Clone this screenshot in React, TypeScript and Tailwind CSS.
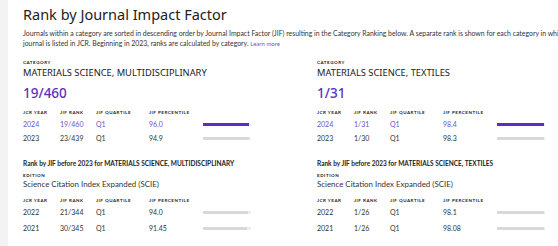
import React from 'react';

interface RankRow {
  year: string;
  rank: string;
  quartile: string;
  percentile: string;
  value: number;
  current?: boolean;
}

interface CategoryData {
  name: string;
  rank: string;
  rows: RankRow[];
  legacy: RankRow[];
}

const categories: CategoryData[] = [
  {
    name: 'MATERIALS SCIENCE, MULTIDISCIPLINARY',
    rank: '19/460',
    rows: [
      { year: '2024', rank: '19/460', quartile: 'Q1', percentile: '96.0', value: 96, current: true },
      { year: '2023', rank: '23/439', quartile: 'Q1', percentile: '94.9', value: 94.9 },
    ],
    legacy: [
      { year: '2022', rank: '21/344', quartile: 'Q1', percentile: '94.0', value: 94 },
      { year: '2021', rank: '30/345', quartile: 'Q1', percentile: '91.45', value: 91.45 },
    ],
  },
  {
    name: 'MATERIALS SCIENCE, TEXTILES',
    rank: '1/31',
    rows: [
      { year: '2024', rank: '1/31', quartile: 'Q1', percentile: '98.4', value: 98.4, current: true },
      { year: '2023', rank: '1/30', quartile: 'Q1', percentile: '98.3', value: 98.3 },
    ],
    legacy: [
      { year: '2022', rank: '1/26', quartile: 'Q1', percentile: '98.1', value: 98.1 },
      { year: '2021', rank: '1/26', quartile: 'Q1', percentile: '98.08', value: 98.08 },
    ],
  },
];

const body = "font-['Lato','Liberation_Sans',sans-serif]";
const heading = "font-['Noto_Sans','Open_Sans',sans-serif]";
const label = "text-[4.5px] leading-[6px] font-bold tracking-[0.12em] uppercase text-[#222]";

const TableHeader: React.FC = () => (
  <div className={`grid grid-cols-[37px_36px_53px_54px_48px] ${label} ${body}`}>
    <span>JCR Year</span>
    <span>JIF Rank</span>
    <span>JIF Quartile</span>
    <span>JIF Percentile</span>
    <span></span>
  </div>
);

const Row: React.FC<{ row: RankRow; height: string }> = ({ row, height }) => (
  <div
    className={`grid grid-cols-[37px_36px_53px_54px_48px] items-center ${height} text-[7px] ${body} ${
      row.current ? 'text-[#6f52c9]' : 'text-[#333]'
    }`}
  >
    <span>{row.year}</span>
    <span>{row.rank}</span>
    <span>{row.quartile}</span>
    <span>{row.percentile}</span>
    <div className="h-[3px] w-[48px] bg-[#eeeeee]">
      <div
        className={`h-full ${row.current ? 'bg-[#5a2fbe]' : 'bg-[#d8d8d8]'}`}
        style={{ width: `${row.value}%` }}
      />
    </div>
  </div>
);

const CategoryBlock: React.FC<{ cat: CategoryData }> = ({ cat }) => (
  <div className="flex flex-col">
    <div className={`${label} ${body}`}>Category</div>
    <div className={`mt-[1px] text-[9.3px] leading-[12px] text-[#222] ${heading}`}>{cat.name}</div>
    <div className={`mt-[5px] text-[13.5px] leading-[18px] font-medium text-[#5a2fbe] ${heading}`}>{cat.rank}</div>
    <div className="mt-[8px]">
      <TableHeader />
      <div className="mt-[1px]">
        {cat.rows.map((r) => (
          <Row key={r.year} row={r} height="h-[14px]" />
        ))}
      </div>
    </div>
    <div className={`mt-[14px] text-[6.5px] leading-[10px] font-bold text-[#222] ${body}`}>
      Rank by JIF before 2023 for {cat.name}
    </div>
    <div className={`mt-[4px] ${label} ${body}`}>Edition</div>
    <div className={`mt-[0px] text-[7.9px] leading-[10px] text-[#333] ${body}`}>
      Science Citation Index Expanded (SCIE)
    </div>
    <div className="mt-[9px]">
      <TableHeader />
      <div className="mt-[0px]">
        {cat.legacy.map((r) => (
          <Row key={r.year} row={r} height="h-[16px]" />
        ))}
      </div>
    </div>
  </div>
);

export default function App() {
  return (
    <div className="flex h-[246px] w-[558px] overflow-hidden bg-white">
      <div className="w-[8px] shrink-0 bg-[#f3f3f3]" />
      <div className="pl-[15px] pt-[4px] flex flex-col min-w-0">
        <h1 className={`text-[14.5px] leading-[20px] text-[#222] ${heading}`}>Rank by Journal Impact Factor</h1>
        <div className={`mt-[4px] text-[6.9px] leading-[10px] text-[#333] whitespace-nowrap ${body}`}>
          <div>
            Journals within a category are sorted in descending order by Journal Impact Factor (JIF) resulting in the
            Category Ranking below. A separate rank is shown for each category in which
          </div>
          <div>
            journal is listed in JCR. Beginning in 2023, ranks are calculated by category.{' '}
            <span className="text-[6px] text-[#6f52c9]">Learn more</span>
          </div>
        </div>
        <div className="mt-[11px] grid grid-cols-[294px_294px]">
          {categories.map((c) => (
            <CategoryBlock key={c.name} cat={c} />
          ))}
        </div>
      </div>
    </div>
  );
}
